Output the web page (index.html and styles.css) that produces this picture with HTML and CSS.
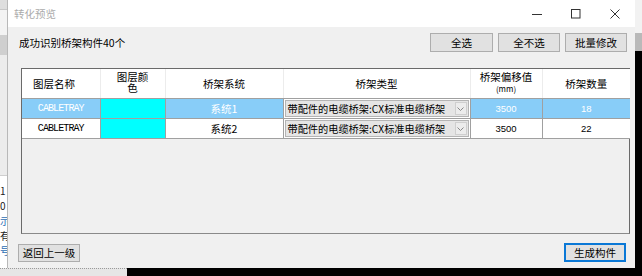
FILE: index.html
```html
<!DOCTYPE html>
<html lang="zh-CN">
<head>
    <meta charset="UTF-8">
    <title>转化预览</title>
    <link rel="stylesheet" href="styles.css">
</head>
<body>
    <div class="screen">
        <div class="backdrop-left">
            <div class="bl-top"></div>
            <div class="bl-light"></div>
            <div class="bl-dark"></div>
            <div class="bl-mid"></div>
            <div class="bl-list">
                <span>1</span>
                <span>0</span>
                <span class="blue">示</span>
                <span>有</span>
                <span class="blue">号</span>
            </div>
        </div>

        <div class="dialog">
            <div class="titlebar">
                <span class="title">转化预览</span>
                <span class="win-btn">
                    <svg width="10" height="10" viewBox="0 0 10 10"><path d="M0 5.5h10" stroke="#333" stroke-width="1"/></svg>
                </span>
                <span class="win-btn">
                    <svg width="10" height="10" viewBox="0 0 10 10"><rect x="0.5" y="0.5" width="8.5" height="8.5" fill="none" stroke="#333" stroke-width="1"/></svg>
                </span>
                <span class="win-btn">
                    <svg width="10" height="10" viewBox="0 0 10 10"><path d="M0.5 0.5l9 9M9.5 0.5l-9 9" stroke="#333" stroke-width="1"/></svg>
                </span>
            </div>

            <div class="content">
                <div class="toolbar">
                    <span class="summary">成功识别桥架构件40个</span>
                    <button class="btn btn-all">全选</button>
                    <button class="btn">全不选</button>
                    <button class="btn">批量修改</button>
                </div>

                <div class="grid">
                    <table>
                        <colgroup>
                            <col style="width: 78px">
                            <col style="width: 65px">
                            <col style="width: 118px">
                            <col style="width: 187px">
                            <col style="width: 72px">
                            <col style="width: 88px">
                        </colgroup>
                        <thead>
                            <tr>
                                <th class="th-name">图层名称</th>
                                <th class="th-two">图层颜<br>色</th>
                                <th>桥架系统</th>
                                <th>桥架类型</th>
                                <th class="th-two">桥架偏移值<br><small>(mm)</small></th>
                                <th>桥架数量</th>
                            </tr>
                        </thead>
                        <tbody>
                            <tr class="selected">
                                <td class="layer">CABLETRAY</td>
                                <td class="swatch"></td>
                                <td>系统1</td>
                                <td class="combo-cell">
                                    <div class="combo">
                                        <span class="combo-text">带配件的电缆桥架:CX标准电缆桥架</span>
                                        <span class="combo-arrow">
                                            <svg width="7" height="4" viewBox="0 0 7 4"><path d="M0.5 0.5l3 3 3-3" fill="none" stroke="#888" stroke-width="1"/></svg>
                                        </span>
                                    </div>
                                </td>
                                <td class="num">3500</td>
                                <td class="num">18</td>
                            </tr>
                            <tr>
                                <td class="layer">CABLETRAY</td>
                                <td class="swatch"></td>
                                <td>系统2</td>
                                <td class="combo-cell">
                                    <div class="combo">
                                        <span class="combo-text">带配件的电缆桥架:CX标准电缆桥架</span>
                                        <span class="combo-arrow">
                                            <svg width="7" height="4" viewBox="0 0 7 4"><path d="M0.5 0.5l3 3 3-3" fill="none" stroke="#888" stroke-width="1"/></svg>
                                        </span>
                                    </div>
                                </td>
                                <td class="num">3500</td>
                                <td class="num">22</td>
                            </tr>
                        </tbody>
                    </table>
                </div>

                <div class="footer">
                    <button class="btn btn-back">返回上一级</button>
                    <button class="btn btn-primary">生成构件</button>
                </div>
            </div>
        </div>

        <div class="backdrop-right">
            <div class="br-top"></div>
            <div class="br-mid"></div>
        </div>
    </div>

    <div class="taskbar">
        <div class="taskbar-left"></div>
    </div>
</body>
</html>
```

FILE: styles.css
```css
body {
    margin: 0;
    height: 276px;
    overflow: hidden;
    background: #000;
    font-family: "Noto Sans CJK SC", "Noto Sans", sans-serif;
    font-size: 10.5px;
    color: #000;
}

.screen {
    display: flex;
    height: 268px;
}

/* desktop behind the dialog */
.backdrop-left {
    width: 7px;
    display: flex;
    flex-direction: column;
    background: #f0f0f0;
    overflow: hidden;
}

.bl-top {
    height: 9px;
    background: #dedede;
    border-bottom: 1px solid #c8c8c8;
}

.bl-light {
    height: 25px;
    background: #f3f3f3;
}

.bl-dark {
    height: 20px;
    background: #cfcfcf;
}

.bl-mid {
    height: 120px;
    background: #ececec;
    border-bottom: 1px solid #cfcfcf;
}

.bl-list {
    display: flex;
    flex-direction: column;
    background: #fff;
    flex: 1;
    padding-top: 7px;
    font-size: 10px;
    line-height: 15px;
    color: #222;
}

.bl-list span {
    height: 15px;
    overflow: hidden;
}

.bl-list .blue {
    color: #2d6fb5;
}

.dialog {
    width: 628px;
    display: flex;
    flex-direction: column;
    background: #f0f0f0;
    border-left: 1px solid #b8b8b8;
    box-sizing: border-box;
}

.titlebar {
    height: 27px;
    display: flex;
    align-items: center;
    background: #fff;
}

.title {
    flex: 1;
    padding-left: 6px;
    color: #ababab;
}

.win-btn {
    width: 39px;
    height: 27px;
    display: flex;
    align-items: center;
    justify-content: center;
}

.win-btn:last-child {
    margin-right: 1px;
}

.content {
    flex: 1;
    display: flex;
    flex-direction: column;
    padding: 0 5px 0 11px;
}

.toolbar {
    display: flex;
    align-items: center;
    height: 19px;
    margin-top: 6px;
    padding-right: 3px;
}

.summary {
    flex: 1;
}

.btn {
    height: 19px;
    width: 62px;
    margin-left: 5px;
    padding: 0;
    border: 1px solid #adadad;
    background: #e1e1e1;
    font-family: inherit;
    font-size: 10.5px;
    color: #000;
    line-height: 16px;
}

.btn-all {
    width: 63px;
}

.grid {
    margin: 16px 0 0 2px;
    height: 166px;
    border: 1px solid #6a6a6a;
    border-bottom-color: #8a8a8a;
    box-sizing: border-box;
    background: #f0f0f0;
}

table {
    width: 608px;
    table-layout: fixed;
    border-collapse: collapse;
}

th {
    height: 27px;
    padding: 0;
    background: #fff;
    font-weight: normal;
    border-left: 1px solid #ececec;
    border-bottom: 1px solid #a0a0a0;
    white-space: nowrap;
}

th:first-child {
    border-left: none;
}

.th-name {
    text-align: left;
    padding-left: 11px;
}

.th-two {
    line-height: 11px;
    vertical-align: top;
    padding-top: 2px;
}

.th-two small {
    font-size: 8px;
}

td {
    height: 19px;
    padding: 0;
    text-align: center;
    background: #fff;
    border: 1px solid #a0a0a0;
    white-space: nowrap;
    overflow: hidden;
}

td:first-child {
    border-left: none;
}

td:last-child {
    border-right: none;
}

.selected td {
    background: #88cdf8;
    color: #fff;
}

.layer {
    font-family: "Liberation Mono", monospace;
    font-size: 10px;
    letter-spacing: -0.9px;
}

.num {
    font-family: "Liberation Sans", Arial, sans-serif;
    font-size: 9.5px;
}

.selected td.swatch,
td.swatch {
    background: #00ffff;
}

.selected td.combo-cell,
td.combo-cell {
    background: #fff;
    padding: 0 1px;
    text-align: left;
    color: #000;
}

.combo {
    display: flex;
    align-items: center;
    height: 17px;
    background: #e5e5e5;
    border: 1px solid #b4b4b4;
    box-sizing: border-box;
}

.combo-text {
    flex: 1;
    padding-left: 2px;
    overflow: hidden;
    font-size: 10.2px;
}

.combo-arrow {
    width: 12px;
    height: 13px;
    margin-right: 1px;
    display: flex;
    align-items: center;
    justify-content: center;
    background: #ececec;
    border: 1px solid #cfcfcf;
    box-sizing: border-box;
}

.footer {
    display: flex;
    justify-content: space-between;
    align-items: center;
    margin-top: 9px;
}

.btn-back {
    margin-left: -1px;
    height: 18px;
}

.btn-primary {
    height: 19px;
    margin-right: 4px;
    border: 2px solid #0a78d6;
    line-height: 14px;
}

.backdrop-right {
    width: 7px;
    display: flex;
    flex-direction: column;
}

.br-top {
    height: 33px;
    background: #f2f2f2;
}

.br-mid {
    height: 18px;
    background: #b9b9b9;
}

.taskbar {
    height: 8px;
}

.taskbar-left {
    width: 127px;
    height: 8px;
    background: #e6e6e6;
    border-top: 1px dotted #9a9a9a;
    box-sizing: border-box;
}
```
